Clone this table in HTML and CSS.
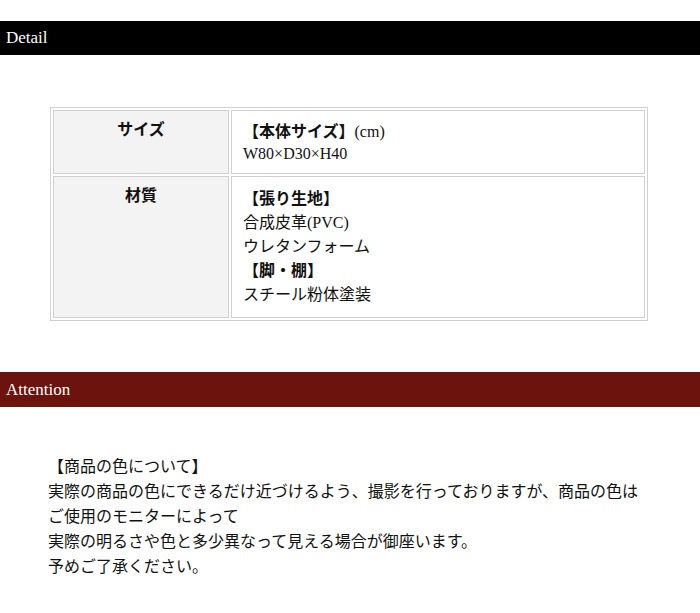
FILE: index.html
```html
<!DOCTYPE html>
<html lang="ja">

<head>
    <meta charset="UTF-8">
    <meta name="viewport" content="width=device-width, initial-scale=1.0">
    <title>Detail</title>
    <link rel="stylesheet" href="styles.css">
</head>

<body>
    <section class="section">
        <h2 class="section-title">Detail</h2>
        <table class="spec-table">
            <tr class="spec-row">
                <th>サイズ</th>
                <td><b>【本体サイズ】</b>(cm)<br>W80×D30×H40</td>
            </tr>
            <tr class="spec-row spec-row--tall">
                <th>材質</th>
                <td>
                    <b>【張り生地】</b><br>
                    合成皮革(PVC)<br>
                    ウレタンフォーム<br>
                    <b>【脚・棚】</b><br>
                    スチール粉体塗装
                </td>
            </tr>
        </table>
    </section>

    <section class="section">
        <h2 class="section-title section-title--attention">Attention</h2>
        <p class="notice">
            【商品の色について】<br>
            実際の商品の色にできるだけ近づけるよう、撮影を行っておりますが、商品の色は<br>
            ご使用のモニターによって<br>
            実際の明るさや色と多少異なって見える場合が御座います。<br>
            予めご了承ください。
        </p>
    </section>
</body>

</html>
```

FILE: styles.css
```css
body,
html {
    margin: 0;
    padding: 0;
    background-color: #fff;
    color: #111;
    font-family: "Liberation Serif", "Noto Sans CJK JP", serif;
    font-size: 16px;
}

.section {
    padding-top: 21px;
}

.section + .section {
    padding-top: 51px;
}

.section-title {
    margin: 0;
    height: 34px;
    line-height: 34px;
    padding-left: 6px;
    background: #000;
    color: #fff;
    font-size: 17px;
    font-weight: normal;
}

.section-title--attention {
    height: 35px;
    line-height: 35px;
    background: #6c130d;
}

.spec-table {
    width: 598px;
    margin: 52px 0 0 50px;
    border: 1px solid #d0d0d0;
    border-spacing: 2px;
}

.spec-table th,
.spec-table td {
    border: 1px solid #d0d0d0;
    vertical-align: top;
    line-height: 22px;
}

.spec-table th {
    width: 154px;
    padding: 8px 10px 10px;
    background: #f3f3f3;
    text-align: center;
    font-weight: bold;
}

.spec-table td {
    padding: 10px 11px 8px;
    text-align: left;
}

.spec-row--tall td {
    line-height: 24px;
    padding-bottom: 10px;
}

.notice {
    margin: 47px 0 0;
    padding: 0 20px 0 48px;
    line-height: 25px;
}
```
